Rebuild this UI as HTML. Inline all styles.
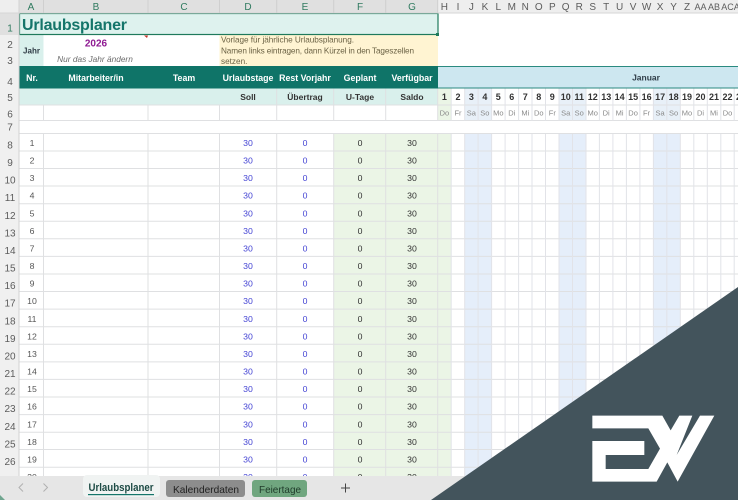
<!DOCTYPE html>
<html lang="de">
<head>
<meta charset="utf-8">
<title>Urlaubsplaner</title>
<style>
html,body{margin:0;padding:0;background:#fff;width:738px;height:500px;overflow:hidden}
svg{display:block;font-family:"Liberation Sans",sans-serif}
.hd text{font-size:10px;fill:#5c5c5c;text-anchor:middle}
.hd .g{fill:#2f7a5f}
.hd .aa{font-size:9px}
.rh text{font-size:10px;fill:#5c5c5c;text-anchor:middle}
.rh .g{fill:#2f7a5f}
.w text{font-size:8.800px;font-weight:bold;fill:#fff;text-anchor:middle}
.s text{font-size:8.500px;font-weight:bold;fill:#333;text-anchor:middle}
.dn text{font-size:9px;font-weight:bold;fill:#333;text-anchor:middle}
.wd text{font-size:7.500px;fill:#8a8a8a;text-anchor:middle}
.n text{font-size:8.700px;fill:#555;text-anchor:middle}
.b text{font-size:8.700px;fill:#4545d4;text-anchor:middle}
.k text{font-size:8.700px;fill:#333;text-anchor:middle}
</style>
</head>
<body>
<svg width="738" height="500" viewBox="0 0 738 500" xmlns="http://www.w3.org/2000/svg">
<rect width="738" height="500" fill="#fff"/>

<!-- fills -->
<rect x="19" y="13" width="419" height="22" fill="#def2ee"/>
<rect x="19" y="35" width="24.500" height="31" fill="#d9f0ec"/>
<rect x="219.500" y="35" width="218.500" height="31" fill="#fff4d2"/>
<rect x="19.500" y="66" width="418.500" height="22.500" fill="#0f7468"/>
<rect x="438" y="66" width="300" height="22.500" fill="#cde7f0"/>
<path d="M438 66.500H738M438 88H738" stroke="#2a8a80" stroke-width="1"/>
<rect x="19.500" y="88.500" width="418.500" height="16.500" fill="#d9f0ec"/>
<rect x="333.700" y="134" width="104" height="342" fill="#ebf5e6"/>
<rect x="437.700" y="134" width="13.500" height="342" fill="#ebf5e6"/>
<rect x="464.700" y="134" width="27" height="342" fill="#e5eefa"/>
<rect x="559" y="134" width="27" height="342" fill="#e5eefa"/>
<rect x="653.400" y="134" width="27" height="342" fill="#e5eefa"/>
<rect x="437.700" y="88.500" width="13.500" height="32" fill="#ebf5e6"/>
<rect x="464.700" y="88.500" width="27" height="32" fill="#e8f0f8"/>
<rect x="559" y="88.500" width="27" height="32" fill="#e8f0f8"/>
<rect x="653.400" y="88.500" width="27" height="32" fill="#e8f0f8"/>

<!-- grid -->
<path fill="none" stroke="#dfe0e2" stroke-width="1" d="M19 105H738M19 120.500H738M19 133.500H738M19 151H738M19 168.500H738M19 186H738M19 203.700H738M19 221.200H738M19 238.800H738M19 256.400H738M19 274H738M19 291.500H738M19 309.100H738M19 326.700H738M19 344.300H738M19 361.900H738M19 379.400H738M19 397H738M19 414.600H738M19 432.200H738M19 449.500H738M19 467.300H738"/>
<path fill="none" stroke="#dfe0e2" stroke-width="1" d="M43.500 105V120.500M43.500 134V476M148 105V120.500M148 134V476M219.500 105V120.500M219.500 134V476M276.700 88.500V120.500M276.700 134V476M333.700 88.500V120.500M333.700 134V476M385.700 88.500V120.500M385.700 134V476M437.700 88.500V120.500M437.700 134V476"/>
<path fill="none" stroke="#e2e3e8" stroke-width="1" d="M451.200 88.500V120.500M451.200 134V476M464.700 88.500V120.500M464.700 134V476M478.100 88.500V120.500M478.100 134V476M491.600 88.500V120.500M491.600 134V476M505.100 88.500V120.500M505.100 134V476M518.600 88.500V120.500M518.600 134V476M532 88.500V120.500M532 134V476M545.500 88.500V120.500M545.500 134V476M559 88.500V120.500M559 134V476M572.500 88.500V120.500M572.500 134V476M586 88.500V120.500M586 134V476M599.400 88.500V120.500M599.400 134V476M612.900 88.500V120.500M612.900 134V476M626.400 88.500V120.500M626.400 134V476M639.900 88.500V120.500M639.900 134V476M653.400 88.500V120.500M653.400 134V476M666.800 88.500V120.500M666.800 134V476M680.300 88.500V120.500M680.300 134V476M693.800 88.500V120.500M693.800 134V476M707.300 88.500V120.500M707.300 134V476M720.800 88.500V120.500M720.800 134V476M734.200 88.500V120.500M734.200 134V476"/>

<!-- title selection -->
<rect x="19.500" y="13.500" width="418.500" height="21" fill="none" stroke="#1f7a5c" stroke-width="1.200"/>
<rect x="436" y="33" width="3" height="3" fill="#1f7a5c"/>
<path d="M144 35.500H148L147 38Z" fill="#c8352a"/>

<!-- column headers -->
<rect x="0" y="0" width="738" height="13" fill="#eeeeee"/>
<rect x="19" y="0" width="419" height="13" fill="#e0e0e0"/>
<rect x="0" y="13" width="19" height="463" fill="#f0f0f0"/>
<rect x="0" y="13" width="19" height="22" fill="#e0e0e0"/>
<path d="M19 0V476" stroke="#d2d2d2" stroke-width="1"/>
<path d="M0 13H738" stroke="#d6d6d6" stroke-width="1"/>
<path d="M43.500 0V13M148 0V13M219.500 0V13M276.700 0V13M333.700 0V13M385.700 0V13M437.700 0V13" stroke="#cfcfcf" stroke-width="1"/>
<g class="hd">
<text class="g" x="31" y="10">A</text><text class="g" x="96" y="10">B</text><text class="g" x="184" y="10">C</text><text class="g" x="248" y="10">D</text><text class="g" x="305" y="10">E</text><text class="g" x="360" y="10">F</text><text class="g" x="412" y="10">G</text>
<text x="444.400" y="10">H</text><text x="458" y="10">I</text><text x="471.400" y="10">J</text><text x="484.900" y="10">K</text><text x="498.300" y="10">L</text><text x="511.800" y="10">M</text><text x="525.300" y="10">N</text><text x="538.800" y="10">O</text><text x="552.300" y="10">P</text><text x="565.700" y="10">Q</text><text x="579.200" y="10">R</text><text x="592.700" y="10">S</text><text x="606.200" y="10">T</text><text x="619.600" y="10">U</text><text x="633.100" y="10">V</text><text x="646.600" y="10">W</text><text x="660.100" y="10">X</text><text x="673.600" y="10">Y</text><text x="687" y="10">Z</text><text class="aa" x="700.500" y="10">AA</text><text class="aa" x="714" y="10">AB</text><text class="aa" x="727.500" y="10">AC</text><text class="aa" x="740" y="10">AD</text>
</g>

<!-- row headers -->
<g class="rh">
<text class="g" x="10" y="31.500">1</text><text x="10" y="48">2</text><text x="10" y="64">3</text><text x="10" y="85">4</text><text x="10" y="101">5</text><text x="10" y="117.500">6</text><text x="10" y="130.500">7</text>
<text x="10" y="148.500">8</text><text x="10" y="166">9</text><text x="10" y="183.700">10</text><text x="10" y="201.200">11</text><text x="10" y="218.800">12</text><text x="10" y="236.400">13</text><text x="10" y="254">14</text><text x="10" y="271.600">15</text><text x="10" y="289.100">16</text><text x="10" y="306.700">17</text><text x="10" y="324.300">18</text><text x="10" y="341.900">19</text><text x="10" y="359.500">20</text><text x="10" y="377">21</text><text x="10" y="394.600">22</text><text x="10" y="412.200">23</text><text x="10" y="429.800">24</text><text x="10" y="447.400">25</text><text x="10" y="464.900">26</text>
</g>

<!-- top text -->
<text x="22" y="30" font-size="16" font-weight="bold" fill="#14756a" textLength="105" lengthAdjust="spacing">Urlaubsplaner</text>
<text x="31.500" y="53.500" font-size="8" font-weight="bold" fill="#2e3a44" text-anchor="middle">Jahr</text>
<text x="96" y="46.500" font-size="10" font-weight="bold" fill="#8e1a92" text-anchor="middle">2026</text>
<text x="95" y="62" font-size="8.300" font-style="italic" fill="#6c6c6c" text-anchor="middle">Nur das Jahr ändern</text>
<g font-size="8.200" fill="#6b6244">
<text x="221" y="42.500" textLength="133" lengthAdjust="spacing">Vorlage für jährliche Urlaubsplanung.</text>
<text x="221" y="53.500" textLength="193" lengthAdjust="spacing">Namen links eintragen, dann Kürzel in den Tageszellen</text>
<text x="221" y="64">setzen.</text>
</g>

<g class="w">
<text x="32" y="81">Nr.</text><text x="96" y="81">Mitarbeiter/in</text><text x="184" y="81">Team</text><text x="248" y="81">Urlaubstage</text><text x="305" y="81">Rest Vorjahr</text><text x="360" y="81">Geplant</text><text x="412" y="81">Verfügbar</text>
</g>
<text x="646" y="80.500" font-size="8.500" font-weight="bold" fill="#2f3d48" text-anchor="middle">Januar</text>
<g class="s">
<text x="248" y="100">Soll</text><text x="305" y="100">Übertrag</text><text x="360" y="100">U-Tage</text><text x="412" y="100">Saldo</text>
</g>
<g class="dn">
<text x="444.400" y="100">1</text><text x="458" y="100">2</text><text x="471.400" y="100">3</text><text x="484.900" y="100">4</text><text x="498.300" y="100">5</text><text x="511.800" y="100">6</text><text x="525.300" y="100">7</text><text x="538.800" y="100">8</text><text x="552.300" y="100">9</text><text x="565.700" y="100">10</text><text x="579.200" y="100">11</text><text x="592.700" y="100">12</text><text x="606.200" y="100">13</text><text x="619.600" y="100">14</text><text x="633.100" y="100">15</text><text x="646.600" y="100">16</text><text x="660.100" y="100">17</text><text x="673.600" y="100">18</text><text x="687" y="100">19</text><text x="700.500" y="100">20</text><text x="714" y="100">21</text><text x="727.500" y="100">22</text><text x="741" y="100">23</text>
</g>
<g class="wd">
<text x="444.400" y="115.500">Do</text><text x="458" y="115.500">Fr</text><text x="471.400" y="115.500">Sa</text><text x="484.900" y="115.500">So</text><text x="498.300" y="115.500">Mo</text><text x="511.800" y="115.500">Di</text><text x="525.300" y="115.500">Mi</text><text x="538.800" y="115.500">Do</text><text x="552.300" y="115.500">Fr</text><text x="565.700" y="115.500">Sa</text><text x="579.200" y="115.500">So</text><text x="592.700" y="115.500">Mo</text><text x="606.200" y="115.500">Di</text><text x="619.600" y="115.500">Mi</text><text x="633.100" y="115.500">Do</text><text x="646.600" y="115.500">Fr</text><text x="660.100" y="115.500">Sa</text><text x="673.600" y="115.500">So</text><text x="687" y="115.500">Mo</text><text x="700.500" y="115.500">Di</text><text x="714" y="115.500">Mi</text><text x="727.500" y="115.500">Do</text>
</g>

<!-- data -->
<g class="n">
<text x="32" y="146">1</text><text x="32" y="163.600">2</text><text x="32" y="181.200">3</text><text x="32" y="198.700">4</text><text x="32" y="216.300">5</text><text x="32" y="233.900">6</text><text x="32" y="251.500">7</text><text x="32" y="269.100">8</text><text x="32" y="286.600">9</text><text x="32" y="304.200">10</text><text x="32" y="321.800">11</text><text x="32" y="339.400">12</text><text x="32" y="357">13</text><text x="32" y="374.500">14</text><text x="32" y="392.100">15</text><text x="32" y="409.700">16</text><text x="32" y="427.300">17</text><text x="32" y="444.900">18</text><text x="32" y="462.400">19</text><text x="32" y="480">20</text>
</g>
<g class="b">
<text x="248" y="146">30</text><text x="248" y="163.600">30</text><text x="248" y="181.200">30</text><text x="248" y="198.700">30</text><text x="248" y="216.300">30</text><text x="248" y="233.900">30</text><text x="248" y="251.500">30</text><text x="248" y="269.100">30</text><text x="248" y="286.600">30</text><text x="248" y="304.200">30</text><text x="248" y="321.800">30</text><text x="248" y="339.400">30</text><text x="248" y="357">30</text><text x="248" y="374.500">30</text><text x="248" y="392.100">30</text><text x="248" y="409.700">30</text><text x="248" y="427.300">30</text><text x="248" y="444.900">30</text><text x="248" y="462.400">30</text><text x="248" y="480">30</text>
<text x="305" y="146">0</text><text x="305" y="163.600">0</text><text x="305" y="181.200">0</text><text x="305" y="198.700">0</text><text x="305" y="216.300">0</text><text x="305" y="233.900">0</text><text x="305" y="251.500">0</text><text x="305" y="269.100">0</text><text x="305" y="286.600">0</text><text x="305" y="304.200">0</text><text x="305" y="321.800">0</text><text x="305" y="339.400">0</text><text x="305" y="357">0</text><text x="305" y="374.500">0</text><text x="305" y="392.100">0</text><text x="305" y="409.700">0</text><text x="305" y="427.300">0</text><text x="305" y="444.900">0</text><text x="305" y="462.400">0</text><text x="305" y="480">0</text>
</g>
<g class="k">
<text x="360" y="146">0</text><text x="360" y="163.600">0</text><text x="360" y="181.200">0</text><text x="360" y="198.700">0</text><text x="360" y="216.300">0</text><text x="360" y="233.900">0</text><text x="360" y="251.500">0</text><text x="360" y="269.100">0</text><text x="360" y="286.600">0</text><text x="360" y="304.200">0</text><text x="360" y="321.800">0</text><text x="360" y="339.400">0</text><text x="360" y="357">0</text><text x="360" y="374.500">0</text><text x="360" y="392.100">0</text><text x="360" y="409.700">0</text><text x="360" y="427.300">0</text><text x="360" y="444.900">0</text><text x="360" y="462.400">0</text><text x="360" y="480">0</text>
<text x="412" y="146">30</text><text x="412" y="163.600">30</text><text x="412" y="181.200">30</text><text x="412" y="198.700">30</text><text x="412" y="216.300">30</text><text x="412" y="233.900">30</text><text x="412" y="251.500">30</text><text x="412" y="269.100">30</text><text x="412" y="286.600">30</text><text x="412" y="304.200">30</text><text x="412" y="321.800">30</text><text x="412" y="339.400">30</text><text x="412" y="357">30</text><text x="412" y="374.500">30</text><text x="412" y="392.100">30</text><text x="412" y="409.700">30</text><text x="412" y="427.300">30</text><text x="412" y="444.900">30</text><text x="412" y="462.400">30</text><text x="412" y="480">30</text>
</g>

<!-- tab bar -->
<rect x="0" y="476" width="738" height="24" fill="#e6e6e6"/>
<path d="M0 495L5 500H0Z" fill="#6fa58f"/>
<path d="M23 483.500L19 487.500L23 491.500M43.500 483.500L47.500 487.500L43.500 491.500" fill="none" stroke="#b0b0b0" stroke-width="1"/>
<rect x="83" y="475" width="77" height="22" rx="4" fill="#f0f3f2"/>
<rect x="88" y="494" width="66" height="1.200" fill="#14756a"/>
<text x="121" y="491" font-size="11" font-weight="bold" fill="#1d4b45" text-anchor="middle" textLength="65" lengthAdjust="spacingAndGlyphs">Urlaubsplaner</text>
<rect x="166" y="480" width="79" height="17" rx="3" fill="#8d8d8d"/>
<text x="173" y="492.800" font-size="10.500" fill="#222" textLength="66" lengthAdjust="spacingAndGlyphs">Kalenderdaten</text>
<rect x="252" y="480" width="55" height="17" rx="3" fill="#70a67f"/>
<text x="259" y="492.800" font-size="10.500" fill="#1f3a2a" textLength="42" lengthAdjust="spacingAndGlyphs">Feiertage</text>
<path d="M341 488H350M345.500 483.500V492.500" stroke="#444" stroke-width="1"/>

<!-- corner banner + logo -->
<polygon points="738,287 738,500 431,500" fill="#43545c"/>
<g transform="translate(585 405) scale(.3333)">
<polygon fill="#fff" points="22,32 232,32 257,76 283,32 322,32 275,150 345,32 388,32 278,230 247,172 215,230 22,230 22,108 178,108 178,150 62,150 62,192 190,192 225,131 190,70 22,70"/>
</g>
</svg>
</body>
</html>
